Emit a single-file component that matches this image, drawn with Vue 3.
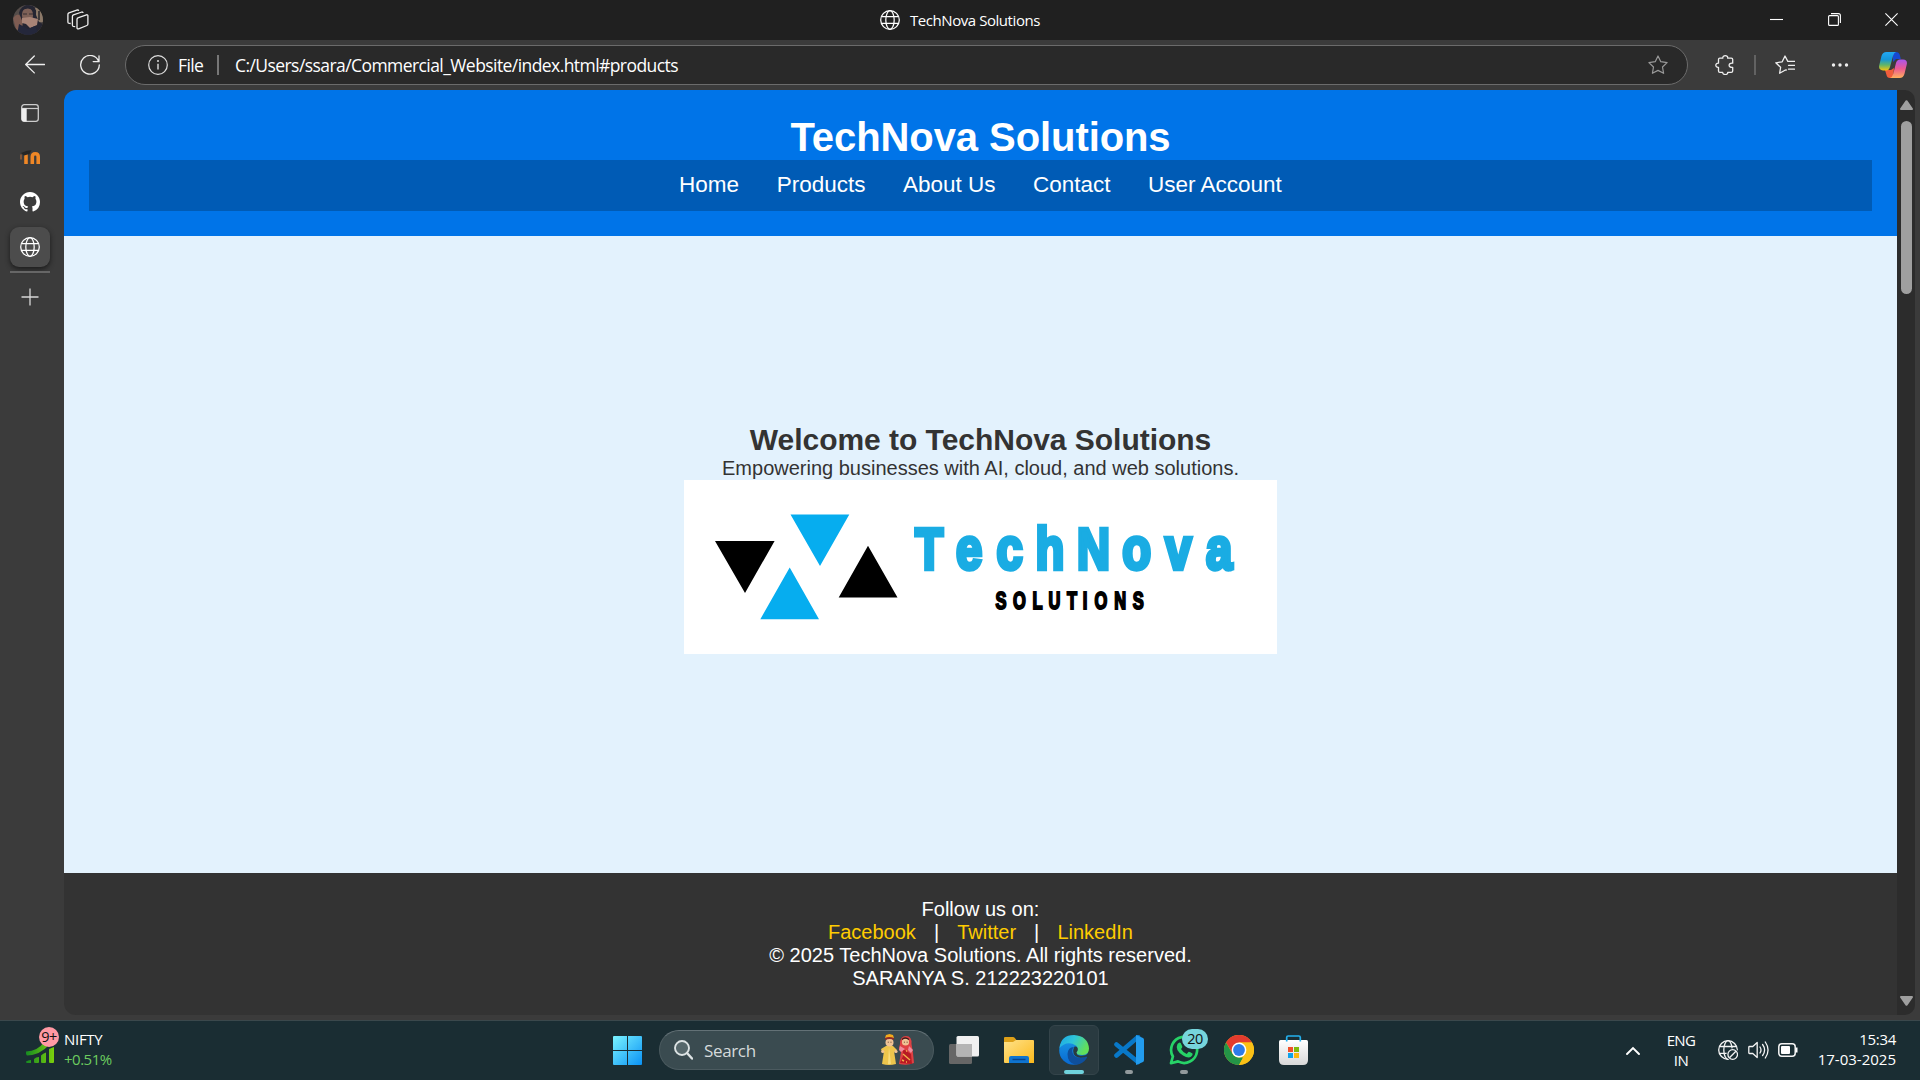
<script setup>
const navItems = ['Home', 'Products', 'About Us', 'Contact', 'User Account']
</script>

<template>
  <div class="screen">
    <svg class="defs" width="0" height="0" aria-hidden="true">
      <symbol id="globe" viewBox="0 0 20 20">
        <g fill="none" stroke="currentColor" stroke-width="1.25">
          <circle cx="10" cy="10" r="9.3" />
          <ellipse cx="10" cy="10" rx="4.2" ry="9.3" />
          <path d="M1.5 6.6h17M1.5 13.4h17" />
        </g>
      </symbol>
      <linearGradient id="cpA" x1="0" y1="0" x2="0" y2="1"><stop offset="0" stop-color="#22a7f2" /><stop offset=".4" stop-color="#1596d8" /><stop offset=".7" stop-color="#5fb56a" /><stop offset="1" stop-color="#f5c50e" /></linearGradient>
      <linearGradient id="cpB" x1="0" y1="0" x2="0" y2="1"><stop offset="0" stop-color="#a855ee" /><stop offset=".5" stop-color="#ec5a92" /><stop offset="1" stop-color="#ffb05c" /></linearGradient>
      <linearGradient id="win" x1="0" y1="0" x2="1" y2="1"><stop offset="0" stop-color="#7af3ff" /><stop offset="1" stop-color="#0a92f5" /></linearGradient>
      <linearGradient id="folder" x1="0" y1="0" x2="1" y2="1"><stop offset="0" stop-color="#ffe28a" /><stop offset="1" stop-color="#fbb91c" /></linearGradient>
      <linearGradient id="edgeTop" x1="0" y1="0" x2="1" y2=".4"><stop offset="0" stop-color="#1aa5e8" /><stop offset=".5" stop-color="#2fc5d8" /><stop offset="1" stop-color="#62e05a" /></linearGradient>
      <linearGradient id="edgeBody" x1="0" y1="0" x2="0" y2="1"><stop offset="0" stop-color="#1a9be8" /><stop offset="1" stop-color="#0968d0" /></linearGradient>
      <linearGradient id="bars" x1="0" y1="0" x2="1" y2="0"><stop offset="0" stop-color="#168a22" /><stop offset="1" stop-color="#7bd00c" /></linearGradient>
      <linearGradient id="bag" x1="0" y1="0" x2="0" y2="1"><stop offset="0" stop-color="#fff" /><stop offset="1" stop-color="#d8d8d8" /></linearGradient>
    </svg>

    <header class="titlebar">
      <svg class="avatar" viewBox="0 0 30 30">
        <clipPath id="face"><circle cx="15" cy="15" r="15" /></clipPath>
        <g clip-path="url(#face)">
          <path fill="#544c49" d="M0 0h30v30H0z" />
          <path fill="#8c7968" d="M18 3h12v14H18z" />
          <path fill="#403a3a" d="M21 5h2v9h-2zM25 6h2v9h-2z" />
          <path fill="#7e5c52" d="M0 13q5-7 9 0l1 15-7-4z" />
          <path fill="#252532" d="M6 8Q8 0 16 0t7 10l3 7 4 2v11H8l2-12z" />
          <ellipse cx="14.5" cy="10" rx="5.6" ry="7.5" fill="#7d6057" />
          <path fill="#a98477" d="M9 13l8-1 8 2-1 6-7 3-4-4-4-1z" />
          <path fill="#24273b" d="M6 19l9 5 7-3 4 9H4z" />
          <path fill="#252532" d="M8 6q7-5 13 0l-1-4-7-2z" />
          <path stroke="#382e32" d="M10 9h4m2 0h4" />
        </g>
      </svg>
      <svg class="workspaces" viewBox="0 0 22 22" fill="none" stroke="#eee" stroke-width="1.3" stroke-linejoin="round">
        <path d="M11.500 8.600 19.500 5.800q1.400-.2 1.400 1v8.200q0 1.200-1 1.500l-8.300 3.300q-1.600.5-1.600-1v-8.600q0-1.200 1.500-1.600z" />
        <path d="M8.200 17.600 6.200 17.300q-.8-.2-.8-1.300V7.600q0-1.300 1-1.700l8.500-2.900q1-.1 1.100 1" />
        <path d="M3.700 14.500 1.700 14.100q-.8-.2-.8-1.200V5.500q0-1.300 1-1.700L10.500.9q1-.1 1.200.9" />
      </svg>
      <div class="window-title">
        <svg class="ic20"><use href="#globe" /></svg>
        <span>TechNova Solutions</span>
      </div>
      <div class="window-controls">
        <svg viewBox="0 0 13 13"><path d="M0 6.5h13" /></svg>
        <svg viewBox="0 0 13 13"><rect x=".6" y="2.6" width="9.8" height="9.8" rx="1" /><path d="M3 .6h7.4q2 0 2 2V10" /></svg>
        <svg viewBox="0 0 13 13"><path d="M.4.4l12.2 12.2M12.6.4.4 12.6" /></svg>
      </div>
    </header>

    <div class="toolbar">
      <svg class="ic20" viewBox="0 0 20 20" fill="none" stroke="#eee" stroke-width="1.3" stroke-linecap="round" stroke-linejoin="round"><path d="M19.5 9.5H.8M9.3 1 .7 9.5l8.6 8.4" /></svg>
      <svg class="ic20 refresh" viewBox="0 0 20 20" fill="none" stroke="#eee" stroke-width="1.3" stroke-linecap="round"><path d="M18.7 6.5A9.3 9.3 0 1 0 19.3 10M19 .8v5.8h-5.8" /></svg>
      <div class="address">
        <svg class="ic20" viewBox="0 0 20 20"><circle cx="10" cy="10" r="9.3" fill="none" stroke="#ddd" stroke-width="1.2" /><path d="M10 8.7v5.8" stroke="#ddd" stroke-width="1.4" /><circle cx="10" cy="6" r="1" fill="#ddd" /></svg>
        <span class="scheme">File</span>
        <i class="divider" />
        <span class="url">C:/Users/ssara/Commercial_Website/index.html#products</span>
        <svg class="ic20 star" viewBox="0 0 20 20" fill="none" stroke="#999" stroke-width="1.2" stroke-linejoin="round"><path d="M10 1l2.8 5.7 6.3.9-4.6 4.4 1.1 6.3L10 15.400l-5.600 2.900 1.100-6.300L.9 7.600l6.300-.9z" /></svg>
      </div>
      <svg class="ic20 puzzle" viewBox="0 0 20 20" fill="none" stroke="#eee" stroke-width="1.3" stroke-linejoin="round"><path d="M4.800 3.200h3C7.300-.2 13.300-.2 12.700 3.200h3.500q1.500 0 1.500 1.300v3.700c-4.800-.7-4.800 4.800 0 4.100v3.800q0 1.200-1.500 1.200h-3.500c.6 3-5.400 3-5 0h-2.900q-1.300 0-1.300-1.200v-3.800c-3.600.5-3.600-4.500 0-4.100V4.500q0-1.300 1.300-1.300z" /></svg>
      <i class="divider dim" />
      <svg class="ic20 favs" viewBox="0 0 20 20" fill="none" stroke="#eee" stroke-width="1.3" stroke-linejoin="round" stroke-linecap="round"><path d="M11.300 15l-1.300.2-5.400 3.100 1-6L.8 7.800l6.400-1L10 1l2.800 5.400M13 6.400h6.600M13.500 10.300h6M13.500 14.200h6" /></svg>
      <svg class="ic20 dots" viewBox="0 0 20 20" fill="#eee"><circle cx="3.500" cy="10" r="1.700" /><circle cx="10" cy="10" r="1.700" /><circle cx="16.500" cy="10" r="1.700" /></svg>
      <svg class="copilot" viewBox="0 0 28 26">
        <path fill="#1649d2" d="M14 0h3q3 0 3.800 3l1 4H17l-3 3z" />
        <path fill="#f05d3c" d="M14 26h-3q-3 0-3.500-3L6 18h6l3-2z" />
        <path fill="url(#cpA)" d="M7.500 0H17q-2 .6-3 4l-3 11q-1 3.500-4 3.500H4Q-1 18 .3 13L2.500 4Q3.700 0 7.500 0z" />
        <path fill="url(#cpB)" d="M21 7.500h3q5 .4 3.700 5.300l-2.200 9Q24.500 26 20.500 26H11q2.300-.8 3.200-4l2.800-11q1-3.500 4-3.500z" />
      </svg>
    </div>

    <div class="body">
      <aside class="tabs">
        <div class="tab"><svg width="18" height="18" viewBox="0 0 18 18"><rect x=".7" y=".7" width="16.600" height="16.600" rx="2.500" fill="none" stroke="#ccc" stroke-width="1.300" /><path d="M1 4.500h16" stroke="#ccc" stroke-width="1.200" /><path fill="#eee" d="M.7 4.500h5v13H3q-2.300 0-2.300-2z" /></svg></div>
        <div class="tab moodle"><svg width="20" height="14" viewBox="0 0 20 14"><path d="M6 4v10M12.300 14V6.700q0-3 2.950-3t2.950 3V14" fill="none" stroke="#ef8726" stroke-width="3.600" /><path d="M1 3 7 .8 11.500.3 9.500 4 4 5.600z" fill="#252525" /><path d="M1 4.500v5" stroke="#a06138" stroke-width="1.400" /></svg></div>
        <div class="tab"><svg width="20" height="20" viewBox="0 0 16 16"><path fill="#fff" d="M8 0C3.580 0 0 3.580 0 8c0 3.540 2.290 6.530 5.470 7.590.4.070.55-.17.55-.38 0-.19-.01-.82-.01-1.490-2.010.37-2.530-.49-2.690-.94-.09-.23-.48-.94-.82-1.130-.28-.15-.68-.52-.01-.53.63-.01 1.080.58 1.230.82.720 1.210 1.870.87 2.330.66.070-.52.280-.87.510-1.070-1.780-.2-3.640-.89-3.640-3.950 0-.87.310-1.590.82-2.150-.08-.2-.36-1.020.08-2.120 0 0 .67-.21 2.200.82a7.600 7.600 0 0 1 4 0c1.530-1.040 2.200-.82 2.200-.82.440 1.100.16 1.920.08 2.120.51.560.82 1.270.82 2.150 0 3.070-1.870 3.750-3.650 3.950.29.25.54.73.54 1.480 0 1.070-.01 1.930-.01 2.200 0 .21.15.46.55.38A8.010 8.010 0 0 0 16 8c0-4.420-3.580-8-8-8z" /></svg></div>
        <div class="tab active"><svg class="ic20"><use href="#globe" /></svg></div>
        <i class="rule" />
        <svg class="plus" viewBox="0 0 18 18"><path d="M9 .5v17M.5 9h17" stroke="#d8d8d8" stroke-width="1.300" /></svg>
      </aside>

      <main class="page">
        <header class="site-header">
          <h1>TechNova Solutions</h1>
          <nav><a v-for="item in navItems" :key="item">{{ item }}</a></nav>
        </header>
        <section class="hero">
          <h2>Welcome to TechNova Solutions</h2>
          <p>Empowering businesses with AI, cloud, and web solutions.</p>
          <svg class="logo" viewBox="0 0 593 174">
            <path d="M31 61h59.600L61 113zM154.700 117.500h58.800L184 65.700z" fill="#000" />
            <path d="M106.500 34.500h58.800L136 86zM76.300 139.300H135L105.700 87.500z" fill="#06adef" />
            <text class="brand" transform="scale(.8 1)" y="88.800"><tspan class="cap" x="306.600">T</tspan><tspan x="356.300 406.900 457.500">ech</tspan><tspan class="cap" x="511.900">N</tspan><tspan x="565.900 617.900 668.800">ova</tspan></text>
            <text class="brand-sub" transform="scale(.7 1)" x="453 479.300 505 529.100 554.300 573.100 595.600 623 649" y="128.800">SOLUTIONS</text>
          </svg>
        </section>
        <footer class="site-footer">
          <p>Follow us on:</p>
          <p><a>Facebook</a> | <a>Twitter</a> | <a>LinkedIn</a></p>
          <p>© 2025 TechNova Solutions. All rights reserved.</p>
          <p>SARANYA S. 212223220101</p>
        </footer>
      </main>

      <div class="scrollbar">
        <svg width="13" height="10" viewBox="0 0 13 10"><path d="M6.500 1.200 12 9H1z" fill="#9f9f9f" stroke="#9f9f9f" stroke-width="2" stroke-linejoin="round" /></svg>
        <i class="thumb" />
        <svg class="down" width="13" height="10" viewBox="0 0 13 10"><path d="M6.500 8.800 12 1H1z" fill="#9f9f9f" stroke="#9f9f9f" stroke-width="2" stroke-linejoin="round" /></svg>
      </div>
    </div>

    <div class="taskbar">
      <div class="widget">
        <div class="market">
          <svg width="28" height="24" viewBox="0 0 28 24" fill="url(#bars)"><path d="M0 11.500Q12 11 18 2l5 3Q14 15 1 15.500q-1.500-1.500-1-4zM0 21.500q2-1.500 5-1.500v3H1q-1 0-1-1.500zM8 19q2-2 5-2v5q0 1-1 1H9q-1 0-1-1zM15 15.500q2-2 5-3V22q0 1-1 1h-3q-1 0-1-1zM23 9l5-2v15q0 1-1 1h-3q-1 0-1-1z" /></svg>
          <span class="count">9+</span>
        </div>
        <div class="quote"><span class="nifty">NIFTY</span><span class="gain">+0.51%</span></div>
      </div>

      <div class="launcher">
        <svg class="start" viewBox="0 0 29 29"><path fill="url(#win)" d="M1 0h13v14H0V1q0-1 1-1zM15 0h13q1 0 1 1v13H15zM0 15h14v14H1q-1 0-1-1zM15 15h14v13q0 1-1 1H15z" /></svg>
        <div class="search">
          <svg width="19" height="20" viewBox="0 0 19 20" fill="none" stroke="#dde3e4"><circle cx="8" cy="8" r="7" fill="#56676b" stroke-width="1.900" /><path d="m13 13 5 5.500" stroke-width="2.400" stroke-linecap="round" /></svg>
          <span>Search</span>
          <svg class="couple" width="33" height="32" viewBox="0 0 33 32">
            <path fill="#edc54c" d="M5 12h7l4 4-2 3-1-2 2 13q-7 2-14 0l2-13-2 1-1-3z" />
            <path fill="#f8dc7b" d="m8 13 2 17H7z" />
            <circle cx="8.500" cy="8.500" r="4" fill="#f0c394" />
            <path fill="#8e2b28" d="M4 6q-.5-4 4.500-4t4.500 4q-4-2-9 0z" />
            <path fill="#f4aa1c" d="M4 4q4-2 9 0l-1-3L8.500 0 5 1z" />
            <circle cx="1.800" cy="17.500" r="1.600" fill="#f0c394" /><circle cx="15" cy="17.500" r="1.600" fill="#f0c394" />
            <path fill="#df4143" d="M19 10q0-8 6-8t5.500 8l1.500 9 1 10q-7 3-15 1l2-12-2-4z" />
            <path fill="#b71a23" d="m22 15 8 5 1 10-12-1 3-7z" />
            <circle cx="24.500" cy="8" r="3.600" fill="#f0c394" />
            <path d="M21 5.500q3-3 7 0" fill="none" stroke="#3b1b18" stroke-width="1.300" />
            <path fill="#f08b9b" d="m19 12 5 3-4 3-2-2zM28 12l4 4-2 3-3-3z" />
            <path d="m22 20 7 6M21 26l2 1M25 17h1M25 28h1" stroke="#f2b24a" stroke-width="1.400" />
            <path d="M6.800 8.200h.8m2 0h.8m12.500 0h.8m2 0h.8" stroke="#3b241c" />
          </svg>
        </div>
        <div class="apps">
          <div class="app"><svg width="30" height="28" viewBox="0 0 30 28"><rect y="8" width="23" height="20" rx="1.500" fill="#666" /><rect x="7.500" width="22.500" height="20.500" rx="1.500" fill="#f0f0f0" /><path fill="#b4b4b4" d="M7.500 8H23v12.500H9q-1.500 0-1.500-1.500z" /></svg></div>
          <div class="app"><svg width="30" height="28" viewBox="0 0 30 28"><path fill="#dda018" d="M0 7V2Q0 1 1 1h8q1 0 1.600.8L14 6z" /><path fill="url(#folder)" d="M0 6h9l3-2h17q1 0 1 1v22H1q-1 0-1-1z" /><path fill="#0f74cf" d="M5 27v-5q0-2 2-2h16q2 0 2 2v5z" /><path d="M8.500 23.500h13" stroke="#08438b" stroke-width="1.400" /></svg></div>
          <div class="app current">
            <svg width="30" height="30" viewBox="0 0 30 30"><circle cx="14.500" cy="15.500" r="14.300" fill="url(#edgeBody)" /><path fill="#0f4f9c" d="M8.500 19Q9 12 15 12q-3 3-1 7 3 6 13.500 2.500 1 0 .5 1.300-4 6.500-11.500 7Q8.500 28 8.500 19z" /><path fill="#293a40" d="M15.500 11.500q4-.5 4 3.500 0 2-1.300 3.300-.8 1.500 2 2.300 5 1 9.800-2.300v3l-3 .5q-7 2.500-11-1-3.500-4-.5-9.300z" /><path fill="url(#edgeTop)" d="M.4 13Q2 0 15 0q14 1 15 13.500 0 6.500-6.500 6.500-6 0-6-2.500 3-3.500-.5-7Q8 5 .4 13z" /></svg>
            <i class="indicator wide" />
          </div>
          <div class="app"><svg width="30" height="30" viewBox="0 0 30 30"><path d="M2.500 20.500 24 2M2.500 9.500 24 27" stroke="#0878c8" stroke-width="4.600" stroke-linecap="round" /><path fill="#229cee" d="m22 0 7 3q1 .5 1 2v20q0 1.500-1 2l-7 3z" /><path fill="#1a2d33" d="m22 9-8 6 8 6z" /></svg><i class="indicator" /></div>
          <div class="app"><svg width="30" height="30" viewBox="0 0 30 30"><path d="M2 28.200 3.900 21.500A13 13 0 1 1 9 26.400z" fill="none" stroke="#27d367" stroke-width="2.700" stroke-linejoin="round" /><path fill="#27d367" d="M8.500 9q2-2.500 3.200-1l1.600 3.500q.2 1-1.300 2.500 2 3.500 5.700 4.900l1.700-1.900q.7-.7 4.100 1.500.8 1.500-1.500 3.300-3 1.800-8-1.300-8.500-5.500-5.500-11.500z" /></svg><span class="badge">20</span><i class="indicator" /></div>
          <div class="app"><svg width="30" height="30" viewBox="0 0 30 30"><circle cx="15" cy="15" r="15" fill="#fbc116" /><path fill="#e33b2e" d="M2 7.500A15 15 0 0 1 28 7.500H15l-6.500 11z" /><path fill="#249447" d="M2 7.500 8.500 18.700q2.500 4 6.500 3.800h4L15 30A15 15 0 0 1 2 7.500z" /><path fill="#fbc116" d="m21.500 18.700-6.500 11.300A15 15 0 0 0 28 7.500H15z" /><circle cx="15" cy="15" r="7.400" fill="#fff" /><circle cx="15" cy="15" r="5.900" fill="#2e7bea" /></svg></div>
          <div class="app store"><svg width="29" height="30" viewBox="0 0 29 30"><path fill="url(#bag)" d="M1.500 5h26q1.500 0 1.500 1.500V25q0 5-5 5H5q-5 0-5-5V6.500Q0 5 1.500 5z" /><path d="M7.700 6.500v-4q0-1.500 1.500-1.500h10.600q1.500 0 1.500 1.500v4" fill="none" stroke="#23b1ee" stroke-width="1.700" /><path fill="#f0502a" d="M9 12h5v5H9z" /><path fill="#80b90a" d="M15 12h5v5h-5z" /><path fill="#0ea2ea" d="M9 18h5v5H9z" /><path fill="#fdb80c" d="M15 18h5v5h-5z" /></svg></div>
        </div>
      </div>

      <div class="tray">
        <svg class="chevron" width="14" height="9" viewBox="0 0 14 9"><path d="m1 8 6-6 6 6" fill="none" stroke="#fff" stroke-width="1.900" stroke-linecap="round" /></svg>
        <div class="lang"><span>ENG</span><span>IN</span></div>
        <svg class="net" width="20" height="20" viewBox="0 0 20 20" fill="none" stroke="#f4f4f4" stroke-width="1.300"><circle cx="10" cy="10" r="9.300" /><ellipse cx="10" cy="10" rx="4.200" ry="9.300" /><path d="M1.500 6.500h17M1.500 13.400h17" /><circle cx="14.700" cy="14.500" r="6.300" fill="#1a2d33" stroke="none" /><circle cx="14.700" cy="14.500" r="4.800" /><path d="m11.500 17.700 6.400-6.400" /></svg>
        <svg class="sound" width="21" height="20" viewBox="0 0 21 20" fill="none" stroke="#f4f4f4" stroke-width="1.300" stroke-linecap="round" stroke-linejoin="round"><path d="M1.500 6.500h3.300l4.400-4v15l-4.400-4H1.500Q.8 13.500.8 12.700V7.300q0-.8.7-.8zM12 7q2 3 0 6M14.600 4.500q4 5.500 0 11M17.300 2q5.500 8 0 16" /></svg>
        <svg class="battery" width="20" height="14" viewBox="0 0 20 14"><rect x=".8" y=".8" width="16.400" height="12.400" rx="3" fill="none" stroke="#f4f4f4" stroke-width="1.500" /><rect x="3" y="3" width="9" height="8" rx="1" fill="#fff" /><path d="M18.500 4.500v5" stroke="#fff" stroke-width="2" /></svg>
        <div class="clock"><span>15:34</span><span class="date">17-03-2025</span></div>
      </div>
    </div>
  </div>
</template>

<style>
body { margin: 0; background: #3b3b3b; overflow: hidden; }
</style>

<style scoped>
.screen { width: 1920px; height: 1080px; display: flex; flex-direction: column; overflow: hidden; background: #3b3b3b; color: #fff; font-family: "Open Sans", "Noto Sans", sans-serif; }
.screen *, .screen { box-sizing: border-box; }
.defs { position: absolute; }
svg { display: block; flex: none; }
i { display: block; flex: none; }
span { white-space: nowrap; }
.ic20 { width: 20px; height: 20px; }

.titlebar { height: 40px; flex: none; display: flex; align-items: center; background: #202020; padding: 0 22px 0 13px; }
.avatar { width: 30px; height: 30px; }
.workspaces { width: 22px; height: 22px; margin-left: 24px; }
.window-title { display: flex; align-items: center; gap: 10px; margin-left: 791px; font-size: 15px; letter-spacing: -.44px; }
.window-controls { margin-left: auto; display: flex; gap: 44.500px; padding-bottom: 1px; }
.window-controls svg { width: 13px; height: 13px; fill: none; stroke: #fff; stroke-width: 1.100; }

.toolbar { height: 50px; flex: none; display: flex; align-items: center; padding: 0 13px 0 25px; }
.refresh { margin-left: 35px; }
.address { width: 1563px; height: 40px; margin-left: 25px; border: 1px solid #6b6b6b; border-radius: 20px; background: #292929; display: flex; align-items: center; padding: 0 19px 0 22px; font-size: 17.500px; line-height: 24px; }
.scheme { margin-left: 10px; width: 27px; letter-spacing: -.6px; }
.divider { width: 2px; height: 20px; margin-left: 12px; background: #777; }
.url { margin-left: 16px; letter-spacing: -.57px; padding-bottom: 1px; }
.star { margin-left: auto; }
.puzzle { margin-left: 27px; }
.divider.dim { margin-left: 19px; background: #626262; }
.favs { margin-left: 19px; }
.dots { margin-left: 35px; }
.copilot { width: 28px; height: 26px; margin-left: 29px; }

.body { height: 930px; flex: none; display: flex; padding: 0 5px 5px 0; }
.tabs { width: 64px; display: flex; flex-direction: column; align-items: center; gap: 4.700px; padding: 3px 4px 0 0; }
.tab { width: 40px; height: 40px; display: flex; align-items: center; justify-content: center; }
.moodle { padding-bottom: 2px; }
.tab.active { border-radius: 9px; background: #4c4c4c; box-shadow: 0 2px 5px #1b1b1b; }
.rule { width: 40px; height: 2px; margin-top: -1px; background: #666; }
.plus { width: 18px; height: 18px; margin: 11px 1px 0 0; }

.page { width: 1833px; display: flex; flex-direction: column; border-radius: 12px 0 0 12px; overflow: hidden; font-family: "Liberation Sans", Arial, sans-serif; }
.page h1, .page h2, .page p { margin: 0; }
.site-header { height: 146px; background: #0074e8; padding: 25px; text-align: center; }
.site-header h1 { font-size: 40px; line-height: 45px; letter-spacing: -.08px; }
.site-header nav { height: 51px; background: #005bb5; display: flex; justify-content: center; gap: 37.500px; padding: 11.500px 12.500px; font-size: 22.500px; line-height: 26px; }
.hero { height: 637px; background: #e3f2fd; color: #333; display: flex; flex-direction: column; align-items: center; justify-content: center; padding-bottom: 32px; }
.hero h2 { font-size: 30px; line-height: 34px; letter-spacing: -.03px; }
.hero p { font-size: 20px; line-height: 23px; }
.logo { width: 593px; height: 174px; background: #fff; }
.brand { font-size: 59px; font-weight: 700; fill: #1aace3; stroke: #1aace3; stroke-width: 4.400; text-anchor: middle; }
.brand .cap { font-size: 57px; }
.brand-sub { font-size: 23.500px; font-weight: 700; fill: #000; stroke: #000; stroke-width: 2; text-anchor: middle; }
.site-footer { flex: 1; background: #333; padding-top: 25px; text-align: center; font-size: 20px; line-height: 23px; }
.site-footer a { color: #ffcc00; margin: 0 12.500px; }

.scrollbar { width: 18px; background: #2c2c2c; border-radius: 0 10px 10px 0; display: flex; flex-direction: column; align-items: center; padding: 10px 0 9px 1px; }
.thumb { width: 11px; height: 173px; margin-top: 11px; border-radius: 6px; background: #9f9f9f; }
.down { margin-top: auto; }

.taskbar { height: 60px; flex: none; display: flex; align-items: center; background: #1a2d33; border-top: 1px solid #3b484c; padding: 0 24px 1px 26px; font-size: 15px; line-height: 20px; }
.widget { width: 587px; display: flex; }
.market { position: relative; width: 28px; height: 40px; padding-top: 10px; }
.count { position: absolute; left: 13px; top: -3px; width: 20px; height: 20px; border-radius: 10px; background: #ff99a4; color: #111; text-align: center; font-size: 14.500px; letter-spacing: -.5px; }
.quote, .lang, .clock { display: flex; flex-direction: column; }
.quote, .clock { padding-bottom: 1px; }
.quote { margin: -1px 0 0 10px; }
.nifty { letter-spacing: -.3px; }
.gain { color: #6ccb5f; letter-spacing: -.5px; }
.launcher { display: flex; align-items: center; }
.start { width: 29px; height: 29px; }
.search { width: 275px; height: 40px; margin-left: 17px; border-radius: 20px; background: #3a4b50; border: 1px solid #4b5a5f; border-top-color: #637176; display: flex; align-items: center; padding: 0 19px 0 14px; font-size: 17px; color: #d5dadb; }
.search span { margin-left: 11px; padding-top: 1px; letter-spacing: -.35px; }
.couple { margin-left: auto; }
.apps { display: flex; gap: 5px; margin-left: 5px; }
.app { position: relative; width: 50px; height: 50px; display: flex; align-items: center; justify-content: center; }
.store { padding-right: 1px; }
.current { background: #293a40; border-radius: 6px; border: 1px solid #34444a; }
.indicator { position: absolute; bottom: 1px; width: 8px; height: 4px; border-radius: 2px; background: #929a9d; }
.indicator.wide { width: 20px; bottom: 0; background: #6fd2dc; }
.badge { position: absolute; left: 23px; top: 4px; width: 26px; height: 20px; border-radius: 10px; background: #76d5dd; color: #111; text-align: center; font-size: 14.500px; letter-spacing: -.5px; }
.tray { margin-left: auto; display: flex; align-items: center; }
.lang { width: 40px; margin-left: 21px; text-align: center; letter-spacing: -.6px; }
.net { margin-left: 17px; }
.sound { margin-left: 10px; }
.battery { margin-left: 9px; }
.clock { margin: -1px 0 0 20px; width: 78px; align-items: flex-end; letter-spacing: -.3px; }
.date { letter-spacing: 0; }
</style>
